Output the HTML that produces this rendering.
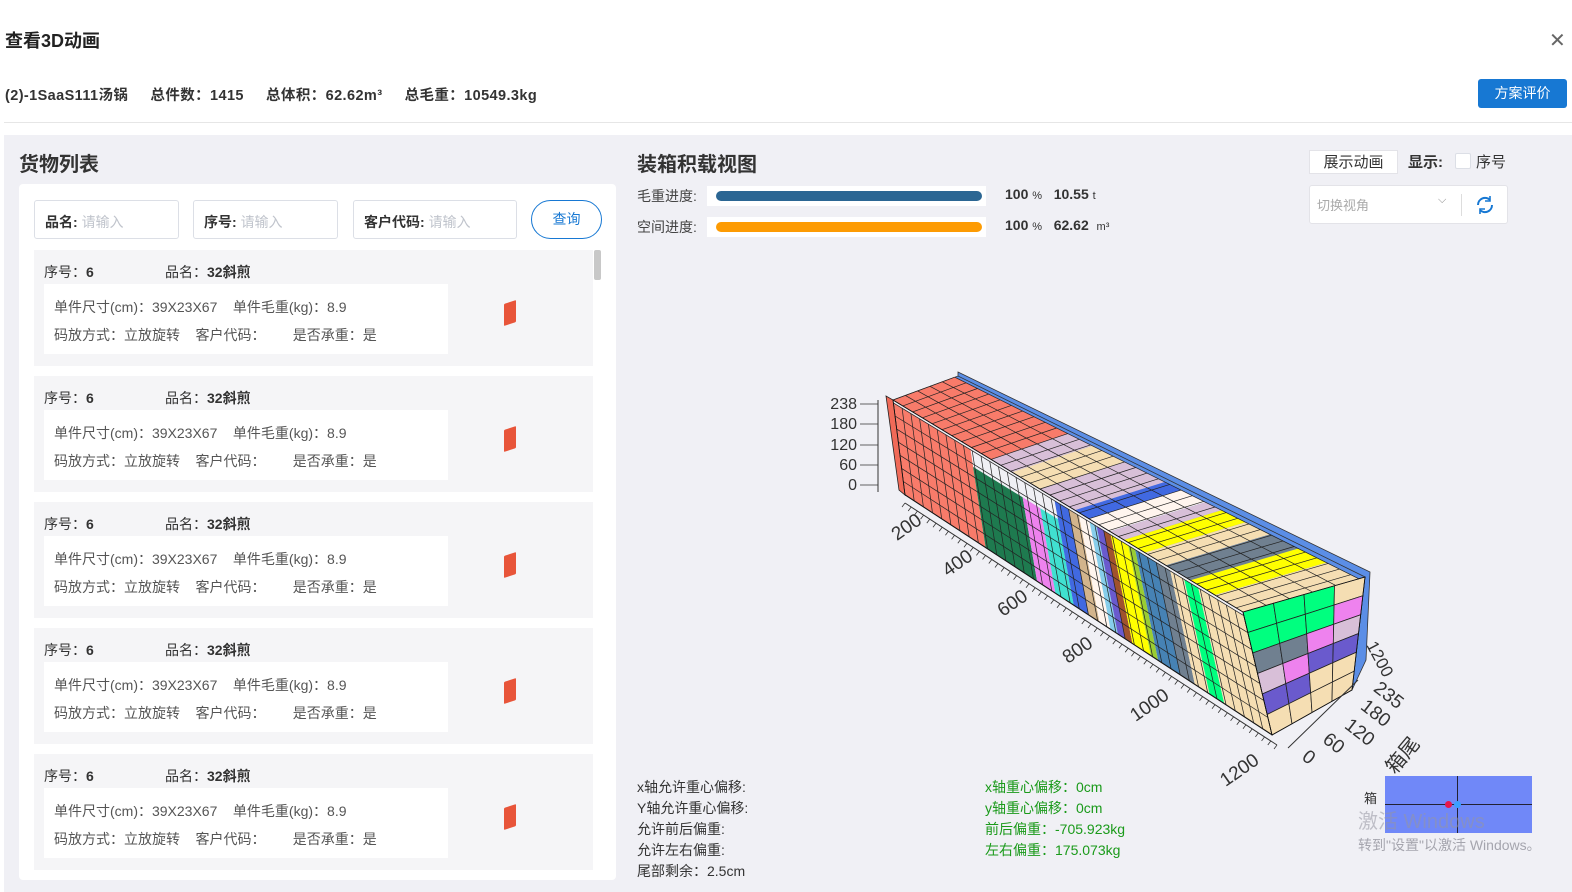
<!DOCTYPE html>
<html><head><meta charset="utf-8">
<style>
*{margin:0;padding:0;box-sizing:border-box}
body{width:1572px;height:892px;background:#fff;font-family:"Liberation Sans","Noto Sans CJK SC",sans-serif;color:#333;position:relative;overflow:hidden}
.a{position:absolute;white-space:nowrap}
.b{font-weight:bold}
.inp{position:absolute;top:200px;height:39px;border:1px solid #dcdfe6;border-radius:3px;background:#fff;font-size:14px;padding:11px 10px;color:#333;font-weight:bold}
.inp span{color:#c0c4cc;font-weight:normal}
.item{position:absolute;left:34px;width:559px;height:116px;background:#f5f5f7}
.item .h{position:absolute;top:12px;font-size:14px;color:#333}
.item .w{position:absolute;left:10px;top:34px;width:404px;height:70px;background:#fff;font-size:14px;color:#555}
.item .w div{position:absolute;left:10px}
.brick{position:absolute;left:470px;top:52px;width:12px;height:22px;background:#e8553a;transform:skewY(-18deg);border-radius:1px}
.g{color:#1a9a1a}
</style></head><body>
<div class="a b" style="left:5px;top:27px;font-size:18px;color:#222">查看3D动画</div>
<div class="a" style="left:1549px;top:28px;font-size:20px;color:#666">✕</div>
<div class="a b" style="left:5px;top:84px;font-size:14.5px;color:#333;letter-spacing:0.4px">(2)-1SaaS111汤锅&nbsp;&nbsp;&nbsp;&nbsp;&nbsp;总件数：1415&nbsp;&nbsp;&nbsp;&nbsp;&nbsp;总体积：62.62m³&nbsp;&nbsp;&nbsp;&nbsp;&nbsp;总毛重：10549.3kg</div>
<div class="a" style="left:1478px;top:79px;width:89px;height:29px;background:#1778d3;border-radius:3px;color:#fff;font-size:14px;text-align:center;line-height:29px">方案评价</div>
<div class="a" style="left:4px;top:122px;width:1568px;height:1px;background:#e6e6e6"></div>
<div class="a" style="left:4px;top:135px;width:1568px;height:757px;background:#f0f0f5"></div>

<div class="a b" style="left:19px;top:148px;font-size:20px;color:#333">货物列表</div>
<div class="a" style="left:19px;top:184px;width:597px;height:696px;background:#fff;border-radius:4px"></div>
<div class="inp" style="left:34px;width:145px">品名: <span>请输入</span></div>
<div class="inp" style="left:193px;width:145px">序号: <span>请输入</span></div>
<div class="inp" style="left:353px;width:164px">客户代码: <span>请输入</span></div>
<div class="a" style="left:531px;top:200px;width:71px;height:39px;border:1px solid #1778d3;border-radius:20px;color:#1778d3;font-size:14px;text-align:center;line-height:37px">查询</div>
<div class="a" style="left:594px;top:250px;width:7px;height:30px;background:#c8c8c8;border-radius:2px"></div>

<div class="item" style="top:250px"><div class="h" style="left:10px">序号：<b>6</b></div><div class="h" style="left:131px">品名：<b>32斜煎</b></div><div class="w"><div style="top:13px">单件尺寸(cm)：39X23X67&nbsp;&nbsp;&nbsp;&nbsp;单件毛重(kg)：8.9</div><div style="top:41px">码放方式：立放旋转&nbsp;&nbsp;&nbsp;&nbsp;客户代码：&nbsp;&nbsp;&nbsp;&nbsp;&nbsp;&nbsp;&nbsp;是否承重：是</div></div><div class="brick"></div></div>
<div class="item" style="top:376px"><div class="h" style="left:10px">序号：<b>6</b></div><div class="h" style="left:131px">品名：<b>32斜煎</b></div><div class="w"><div style="top:13px">单件尺寸(cm)：39X23X67&nbsp;&nbsp;&nbsp;&nbsp;单件毛重(kg)：8.9</div><div style="top:41px">码放方式：立放旋转&nbsp;&nbsp;&nbsp;&nbsp;客户代码：&nbsp;&nbsp;&nbsp;&nbsp;&nbsp;&nbsp;&nbsp;是否承重：是</div></div><div class="brick"></div></div>
<div class="item" style="top:502px"><div class="h" style="left:10px">序号：<b>6</b></div><div class="h" style="left:131px">品名：<b>32斜煎</b></div><div class="w"><div style="top:13px">单件尺寸(cm)：39X23X67&nbsp;&nbsp;&nbsp;&nbsp;单件毛重(kg)：8.9</div><div style="top:41px">码放方式：立放旋转&nbsp;&nbsp;&nbsp;&nbsp;客户代码：&nbsp;&nbsp;&nbsp;&nbsp;&nbsp;&nbsp;&nbsp;是否承重：是</div></div><div class="brick"></div></div>
<div class="item" style="top:628px"><div class="h" style="left:10px">序号：<b>6</b></div><div class="h" style="left:131px">品名：<b>32斜煎</b></div><div class="w"><div style="top:13px">单件尺寸(cm)：39X23X67&nbsp;&nbsp;&nbsp;&nbsp;单件毛重(kg)：8.9</div><div style="top:41px">码放方式：立放旋转&nbsp;&nbsp;&nbsp;&nbsp;客户代码：&nbsp;&nbsp;&nbsp;&nbsp;&nbsp;&nbsp;&nbsp;是否承重：是</div></div><div class="brick"></div></div>
<div class="item" style="top:754px"><div class="h" style="left:10px">序号：<b>6</b></div><div class="h" style="left:131px">品名：<b>32斜煎</b></div><div class="w"><div style="top:13px">单件尺寸(cm)：39X23X67&nbsp;&nbsp;&nbsp;&nbsp;单件毛重(kg)：8.9</div><div style="top:41px">码放方式：立放旋转&nbsp;&nbsp;&nbsp;&nbsp;客户代码：&nbsp;&nbsp;&nbsp;&nbsp;&nbsp;&nbsp;&nbsp;是否承重：是</div></div><div class="brick"></div></div>

<div class="a b" style="left:637px;top:148px;font-size:20px;color:#333">装箱积载视图</div>
<div class="a" style="left:637px;top:186px;font-size:14px;color:#444">毛重进度:</div>
<div class="a" style="left:637px;top:217px;font-size:14px;color:#444">空间进度:</div>
<div class="a" style="left:707px;top:186px;width:279px;height:20px;background:#fff"></div>
<div class="a" style="left:707px;top:217px;width:279px;height:20px;background:#fff"></div>
<div class="a" style="left:716px;top:191px;width:266px;height:10px;background:#2b6693;border-radius:5px"></div>
<div class="a" style="left:716px;top:222px;width:266px;height:10px;background:#fd9b03;border-radius:5px"></div>
<div class="a" style="left:1005px;top:186px;font-size:14px;color:#333"><b>100</b> <span style="font-size:11px">%</span>&nbsp;&nbsp;&nbsp;<b>10.55</b> <span style="font-size:11px">t</span></div>
<div class="a" style="left:1005px;top:217px;font-size:14px;color:#333"><b>100</b> <span style="font-size:11px">%</span>&nbsp;&nbsp;&nbsp;<b>62.62</b>&nbsp; <span style="font-size:11px">m³</span></div>

<div class="a" style="left:1309px;top:150px;width:89px;height:24px;background:#fff;border:1px solid #e3e3e8;font-size:15px;text-align:center;line-height:23px;color:#333">展示动画</div>
<div class="a b" style="left:1408px;top:151px;font-size:15px;color:#333">显示:</div>
<div class="a" style="left:1455px;top:153px;width:16px;height:16px;background:#fff;border:1px solid #dcdfe6;border-radius:2px"></div>
<div class="a" style="left:1476px;top:151px;font-size:15px;color:#333">序号</div>
<div class="a" style="left:1309px;top:185px;width:199px;height:39px;background:#fff;border:1px solid #e3e3e8;border-radius:3px"></div>
<div class="a" style="left:1317px;top:195px;font-size:13px;color:#aaa">切换视角</div>
<div class="a" style="left:1438px;top:194px;font-size:11px;color:#888">⌵</div>
<div class="a" style="left:1461px;top:194px;width:1px;height:22px;background:#ddd"></div>
<svg class="a" style="left:1474px;top:194px" width="22" height="22" viewBox="0 0 22 22"><path d="M4 11a7 7 0 0 1 12-5M18 11a7 7 0 0 1-12 5" fill="none" stroke="#1778d3" stroke-width="2"/><path d="M16 2v5h-5M6 20v-5h5" fill="none" stroke="#1778d3" stroke-width="1.6"/></svg>

<svg id="c3d" class="a" style="left:0;top:0" width="1572" height="892"></svg>

<div class="a" style="left:637px;top:777px;font-size:14px;color:#333;line-height:21px">x轴允许重心偏移:<br>Y轴允许重心偏移:<br>允许前后偏重:<br>允许左右偏重:<br>尾部剩余：2.5cm</div>
<div class="a g" style="left:985px;top:777px;font-size:14px;line-height:21px">x轴重心偏移：0cm<br>y轴重心偏移：0cm<br>前后偏重：-705.923kg<br>左右偏重：175.073kg</div>

<div class="a" style="left:1385px;top:776px;width:147px;height:57px;background:#7088f8"></div>
<div class="a" style="left:1385px;top:804px;width:147px;height:1px;background:#223"></div>
<div class="a" style="left:1457px;top:776px;width:1px;height:57px;background:#223"></div>
<div class="a" style="left:1445px;top:801px;width:7px;height:7px;border-radius:50%;background:#e8164a"></div>
<div class="a" style="left:1454px;top:801px;width:7px;height:7px;border-radius:50%;background:#3aa0ff"></div>
<div class="a" style="left:1364px;top:788px;font-size:13px;color:#333">箱</div>
<div class="a" style="left:1358px;top:805px;font-size:20px;color:rgba(150,150,160,.55)">激活 Windows</div>
<div class="a" style="left:1358px;top:835px;font-size:14px;color:rgba(140,140,150,.75)">转到"设置"以激活 Windows。</div>

<script>
var s=document.getElementById('c3d'),h='';
function L(p,q,t){return [p[0]+(q[0]-p[0])*t,p[1]+(q[1]-p[1])*t]}
function poly(pts,f,st){h+='<polygon points="'+pts.map(p=>p[0].toFixed(1)+','+p[1].toFixed(1)).join(' ')+'" fill="'+f+'" stroke="'+(st||'none')+'" stroke-width="0.8"/>'}
function line(p,q,c,w){h+='<line x1="'+p[0].toFixed(1)+'" y1="'+p[1].toFixed(1)+'" x2="'+q[0].toFixed(1)+'" y2="'+q[1].toFixed(1)+'" stroke="'+(c||'#222')+'" stroke-width="'+(w||0.7)+'"/>'}
var A=[893,400],B=[958,376],E=[1365,577],D=[1243,612],C=[905,495],F=[1272,735],G=[1352,690];
var tc=[[0,.28,'#f87b6a'],[.28,.34,'#d8bfd8'],[.34,.42,'#f5deb3'],[.42,.52,'#d8bfd8'],[.52,.56,'#4169e1'],[.56,.62,'#fff5ee'],[.62,.66,'#d8bfd8'],[.66,.72,'#ffff00'],[.72,.78,'#f5deb3'],[.78,.85,'#708090'],[.85,.92,'#ffff00'],[.92,1,'#f5deb3']];
function T(u,v){return L(L(A,D,v),L(B,E,v),u)}
poly([[958,372],[1370,572],[1366,660],[1352,690],[1365,577],[958,380]],'#5b8ee6','#333');
poly([A,B,E,D],'#5b8ee6','#333');
tc.forEach(function(c){poly([T(0,c[0]),T(.95,c[0]),T(.95,c[1]),T(0,c[1])],c[2]);});
for(var v=0;v<=1;v+=0.028)line(T(0,v),T(.95,v),'#222',.7);
for(var u=0;u<=.95;u+=.19)line(T(u,0),T(u,1),'#222',.7);
function Fr(v,w){return L(L(A,D,v),L(C,F,v),w)}
var fc=[[0,.22,'#f87b6a'],[.22,.36,'#1e7a4f'],[.36,.41,'#ee82ee'],[.41,.46,'#40e0d0'],[.46,.50,'#4169e1'],[.50,.53,'#d2b48c'],[.53,.56,'#fff5ee'],[.56,.58,'#87ceeb'],[.58,.60,'#6a5acd'],[.60,.62,'#a0522d'],[.62,.67,'#ffff00'],[.67,.69,'#9acd32'],[.69,.75,'#4682b4'],[.75,.79,'#708090'],[.79,.83,'#f5deb3'],[.83,.87,'#00ff7f'],[.87,1,'#f5deb3']];
fc.forEach(function(c){var w0=(c[2]=='#1e7a4f'||c[2]=='#ee82ee'||c[2]=='#40e0d0')?0.2:0.03;poly([Fr(c[0],w0),Fr(c[1],w0),Fr(c[1],1),Fr(c[0],1)],c[2]);});
for(var v=0;v<=1;v+=0.025)line(Fr(v,0.03),Fr(v,1),'#222',.7);
for(var w=0.03;w<=1;w+=0.138)line(Fr(0,w),Fr(1,w),'#222',.7);
poly([[886,396],A,C,[899,490]],'#f06a58','#222');
function En(u,w){return L(L(D,E,u),L(F,G,u),w)}
var rows=[['#00ff7f','#00ff7f','#00ff7f','#f5deb3'],['#00ff7f','#00ff7f','#00ff7f','#ee82ee'],['#708090','#708090','#ee82ee','#d8bfd8'],['#d8bfd8','#ee82ee','#6a5acd','#6a5acd'],['#6a5acd','#6a5acd','#f5deb3','#f5deb3'],['#f5deb3','#f5deb3','#f5deb3','#f5deb3']];
for(var r=0;r<6;r++)for(var k=0;k<4;k++){poly([En(k/4,r/6),En((k+1)/4,r/6),En((k+1)/4,(r+1)/6),En(k/4,(r+1)/6)],rows[r][k],'#222');}
poly([A,D,F,C],'none','#111');poly([D,E,G,F],'none','#111');
var b0=[905,503],b1=[1277,745];
line(b0,b1,'#333',1);
for(var i=0;i<=60;i++){var p=L(b0,b1,i/60);line(p,[p[0]-3,p[1]+4],'#333',.8);}
line([878,400],[878,492],'#333',1);
[[238,403],[180,423],[120,444],[60,464],[0,484]].forEach(function(a){h+='<text x="857" y="'+(a[1]+6)+'" font-size="16" text-anchor="end" fill="#333" font-family="Liberation Sans,sans-serif">'+a[0]+'</text>';line([860,a[1]+1],[878,a[1]+1],'#333',.8)});
[[200,910,532],[400,961,568],[600,1016,608],[800,1081,655],[1000,1153,710],[1200,1243,775]].forEach(function(a){h+='<text x="'+a[1]+'" y="'+a[2]+'" font-size="19" text-anchor="middle" fill="#333" transform="rotate(-35 '+a[1]+' '+a[2]+')" font-family="Liberation Sans,sans-serif">'+a[0]+'</text>'});
line([1288,748],[1358,680],'#333',1);
[[235,1385,700],[180,1372,718],[120,1356,737],[60,1330,748],[0,1305,762]].forEach(function(a){h+='<text x="'+a[1]+'" y="'+a[2]+'" font-size="19" text-anchor="middle" fill="#333" transform="rotate(38 '+a[1]+' '+a[2]+')" font-family="Liberation Sans,sans-serif">'+a[0]+'</text>'});
h+='<text x="1366" y="645" font-size="17" fill="#333" transform="rotate(62 1366 645)" font-family="Liberation Sans,sans-serif">1200</text>';
h+='<text x="1395" y="775" font-size="20" fill="#333" transform="rotate(-50 1395 775)" font-family="Liberation Sans,Noto Sans CJK SC,sans-serif">箱尾</text>';
s.innerHTML=h;
</script>
</body></html>
